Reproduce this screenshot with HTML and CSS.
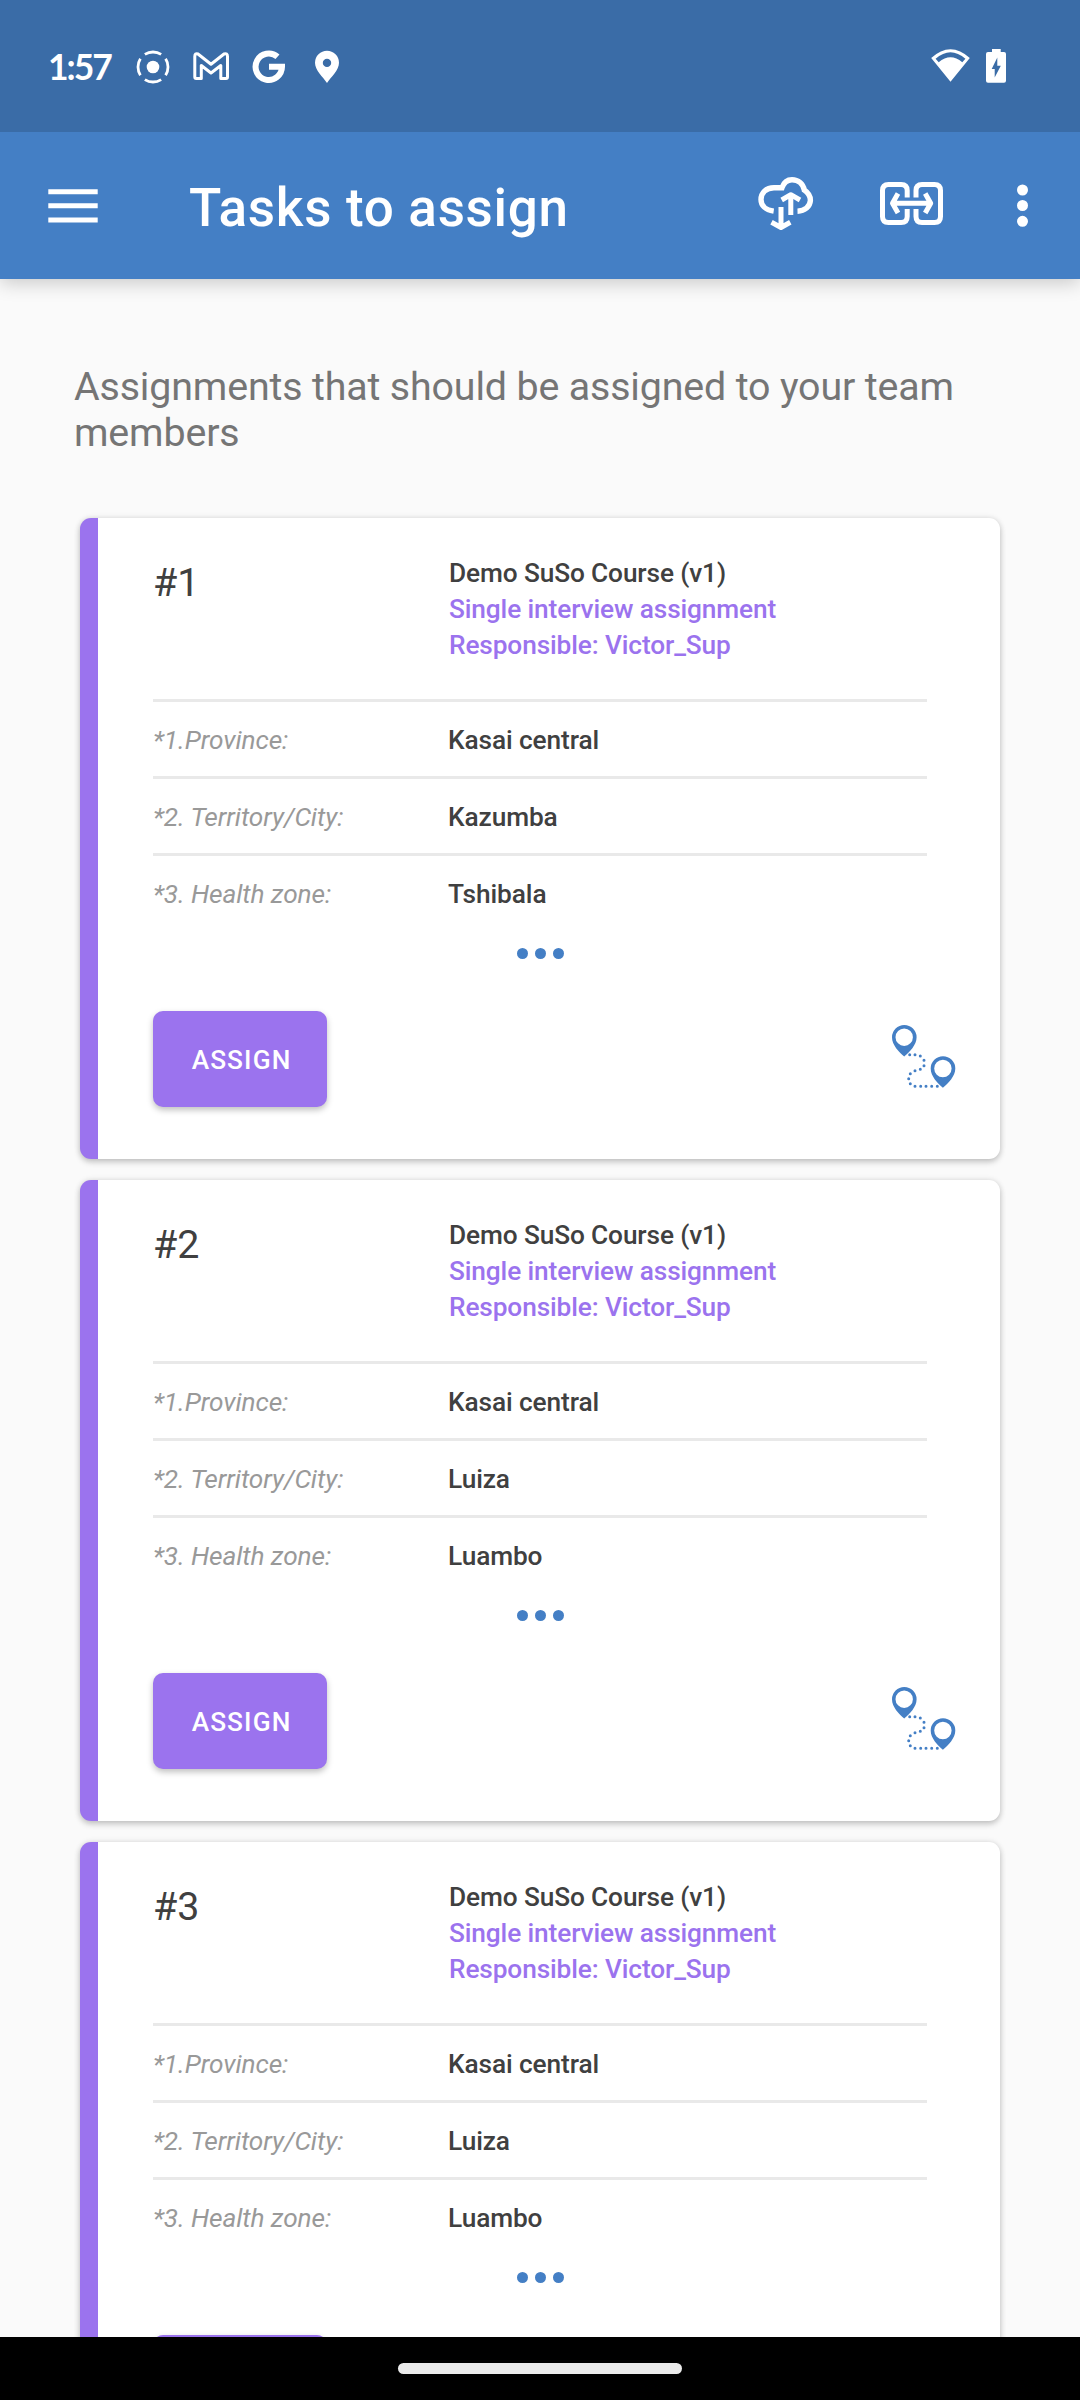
FILE: index.html
```html
<!DOCTYPE html>
<html lang="en">
<head>
<meta charset="utf-8">
<title>Tasks to assign</title>
<link rel="stylesheet" href="styles.css">
</head>
<body>
<svg class="sprite" aria-hidden="true">
  <symbol id="route" viewBox="890 1023 67 67">
    <g fill="#447fc5">
      <path id="pin" fill-rule="evenodd" d="M904.2 1056.5C899 1052 892 1045 892 1037.2a12.3 12.3 0 0 1 24.6 0C916.600 1045 909.500 1052 904.200 1056.500ZM904.200 1028.500a8.700 8.700 0 1 0 0 17.400a8.700 8.700 0 1 0 0-17.400Z"/>
      <use href="#pin" x="38.7" y="31.300"/>
    </g>
    <path fill="none" stroke="#447fc5" stroke-width="3" stroke-linecap="round" d="M909.700 1054.700h0M915 1054.700h0M920.300 1056h0M924 1060.300h0M924 1065.700h0M920.300 1069.300h0M915 1070.700h0M910.300 1073.700h0M908.700 1078.700h0M910.300 1083.700h0M915 1086.300h0M920.700 1086.300h0M926 1086.300h0M931.700 1086.300h0M937.300 1086.300h0"/>
  </symbol>
</svg>
<div class="screen">
  <header class="status">
    <span class="clock">1:57</span>
    <svg class="notifications" width="208" height="40" viewBox="134 47 208 40" fill="none" stroke="#fff">
      <circle cx="153" cy="67" r="6.300" fill="#fff" stroke="none"/>
      <circle cx="153" cy="67" r="15" stroke-width="2.800" pathLength="360" stroke-dasharray="66 24" stroke-dashoffset="33"/>
      <path stroke-width="3" stroke-linejoin="round" d="M194.800 56.500Q194.800 52.700 198 54L211 64.300L224 54Q227.500 52.700 227.500 56.500V77q0 1.400-1.400 1.400H220.800V65.500L211 73L201.300 65.500V78.400H196.200q-1.400 0-1.400-1.400Z"/>
      <path stroke-width="6" d="M277.500 56.800A13.200 13.200 0 1 0 282 66.800H269"/>
      <path fill="#fff" stroke="none" fill-rule="evenodd" d="M327 83C323 77 315 70.500 315 62.800a12 12 0 0 1 24 0C339 70.500 331 77 327 83ZM327 58.700a4.200 4.200 0 1 0 0 8.400a4.200 4.200 0 1 0 0-8.400Z"/>
    </svg>
    <svg class="system" width="78" height="40" viewBox="930 47 78 40" fill="#fff" fill-rule="evenodd">
      <path d="M950.500 81.700L931.200 58Q950.500 40.500 969.800 58ZM935.600 58.700L938.700 62.300Q950.500 52.300 962.300 62.300L965.400 58.700Q950.500 45.700 935.600 58.700Z"/>
      <path d="M992 49h8.700v3h3.300q2 0 2 2v26.700q0 2-2 2h-16q-2 0-2-2V54q0-2 2-2h4ZM997.300 57.500L991.700 69H994.700V77.500L1000.800 65.700H997.300Z"/>
    </svg>
  </header>
  <nav class="appbar">
    <svg class="menu" width="50" height="34" viewBox="0 0 50 34" fill="#fff"><path d="M.3.300h49.400v5H.3zM.3 14.300h49.400v5H.3zM.3 28.500h49.400v5H.3z"/></svg>
    <h1 class="title">Tasks to assign</h1>
    <svg class="actions" width="272" height="56" viewBox="757 176 272 56" fill="none" stroke="#fff" stroke-width="5">
      <path stroke-width="5.400" d="M773.700 211.200C765 210 761 205 761 199.500C761 193 766 187.700 774 187.700H782C784 182 788 179.800 792 179.800C798.500 179.800 803 184 804.300 190C808 192.500 810.400 196 810.400 200.300C810 206.500 805 211 797.500 211.200"/>
      <path d="M790.800 215V196M781.700 200L790.800 194.700L800 200M781 207V227M771.500 222.300L781 227.500L790.300 222.300" stroke-linejoin="round"/>
      <path d="M907.200 197.500V190.500q0-6-6-6H888.500q-6 0-6 6V216.500q0 6 6 6H901.200q6 0 6-6V209M916 197.500V190.500q0-6 6-6H934.500q6 0 6 6V216.500q0 6-6 6H922q-6 0-6-6V209M893 203.200H930M898 193.500L892.500 203.200L898 213M925.200 193.500L930.700 203.200L925.200 213" stroke-linejoin="round"/>
      <path stroke-width="11" stroke-linecap="round" d="M1022.500 190h0M1022.500 205.500h0M1022.500 221.300h0"/>
    </svg>
  </nav>
  <main class="content">
    <p class="intro">Assignments that should be assigned to your team members</p>

    <article class="card">
      <div class="head">
        <h2 class="number">#1</h2>
        <div class="summary"><p class="survey">Demo SuSo Course (v1)</p><p>Single interview assignment</p><p>Responsible: Victor_Sup</p></div>
      </div>
      <dl class="row"><dt>*1.Province:</dt><dd>Kasai central</dd></dl>
      <dl class="row"><dt>*2. Territory/City:</dt><dd>Kazumba</dd></dl>
      <dl class="row"><dt>*3. Health zone:</dt><dd>Tshibala</dd></dl>
      <div class="more"><i></i><i></i><i></i></div>
      <div class="foot"><button class="assign">ASSIGN</button><svg class="route" width="67" height="67"><use href="#route"/></svg></div>
    </article>

    <article class="card">
      <div class="head">
        <h2 class="number">#2</h2>
        <div class="summary"><p class="survey">Demo SuSo Course (v1)</p><p>Single interview assignment</p><p>Responsible: Victor_Sup</p></div>
      </div>
      <dl class="row"><dt>*1.Province:</dt><dd>Kasai central</dd></dl>
      <dl class="row"><dt>*2. Territory/City:</dt><dd>Luiza</dd></dl>
      <dl class="row"><dt>*3. Health zone:</dt><dd>Luambo</dd></dl>
      <div class="more"><i></i><i></i><i></i></div>
      <div class="foot"><button class="assign">ASSIGN</button><svg class="route" width="67" height="67"><use href="#route"/></svg></div>
    </article>

    <article class="card">
      <div class="head">
        <h2 class="number">#3</h2>
        <div class="summary"><p class="survey">Demo SuSo Course (v1)</p><p>Single interview assignment</p><p>Responsible: Victor_Sup</p></div>
      </div>
      <dl class="row"><dt>*1.Province:</dt><dd>Kasai central</dd></dl>
      <dl class="row"><dt>*2. Territory/City:</dt><dd>Luiza</dd></dl>
      <dl class="row"><dt>*3. Health zone:</dt><dd>Luambo</dd></dl>
      <div class="more"><i></i><i></i><i></i></div>
      <div class="foot"><button class="assign"></button></div>
    </article>
  </main>
  <footer class="navbar"><div class="handle"></div></footer>
</div>
</body>
</html>
```
FILE: styles.css
```css
* { box-sizing: border-box; margin: 0; padding: 0; }
body { background: #fafafa; font-family: Roboto, sans-serif; }
svg { display: block; flex: none; }
.sprite { display: none; }
.screen { display: flex; flex-direction: column; width: 1080px; height: 2400px; overflow: hidden; }

.status { flex: none; display: flex; align-items: center; height: 132px; padding: 2px 72px 0 48px; background: #3a6ca7; color: #fff; z-index: 2; }
.clock { width: 86px; font: 700 35.5px/44px Lato, sans-serif; letter-spacing: -2px; }
.system { margin-left: auto; }

.appbar { flex: none; display: flex; align-items: center; height: 147px; padding: 0 51px 0 48px; background: #447fc5; color: #fff; box-shadow: 0 4px 18px rgba(0, 0, 0, .2); z-index: 1; }
.title { margin-left: 91px; font-size: 53px; font-weight: 500; line-height: 62px; letter-spacing: .7px; padding-top: 4px; }
.actions { margin-left: auto; margin-top: -3px; }

.content { flex: 1; min-height: 0; overflow: hidden; padding: 85px 80px 0; }
.intro { margin: 0 -6px 62px; font-size: 39.375px; line-height: 46px; letter-spacing: -.15px; color: #757575; }

.card { height: 641px; margin-bottom: 21px; padding: 0 43px 0 55px; border-left: 18px solid #9b73ee; border-radius: 11px; background: #fff; box-shadow: 0 3px 6px rgba(0, 0, 0, .2), 0 0 6px rgba(0, 0, 0, .1); }
.head, .row { display: grid; grid-template-columns: 295px 1fr; margin-right: 30px; }
.head { height: 181px; padding-top: 37px; }
.number { padding-top: 5px; font-size: 39.375px; font-weight: 400; line-height: 46px; color: #404040; }
.summary { padding-left: 1px; font-size: 26.25px; font-weight: 500; line-height: 36px; letter-spacing: -.12px; color: #9b73ee; }
.survey { color: #404040; }
.row { height: 77px; align-items: center; padding-top: 2px; border-top: 3px solid #e9e9e9; font-size: 26.25px; line-height: 36px; letter-spacing: -.1px; }
.row dt { color: #999; font-style: italic; }
.row dd { color: #404040; font-weight: 500; }
.more { display: flex; justify-content: center; gap: 7px; height: 81px; padding-top: 18px; margin-right: 14px; margin-left: -15px; }
.more i { width: 11px; height: 11px; border-radius: 50%; background: #447fc5; }
.foot { display: flex; justify-content: space-between; align-items: flex-start; }
.assign { width: 174px; height: 96px; padding: 2px 0 0 3px; border: 0; border-radius: 10px; background: #9b73ee; color: #fff; font: 500 26.25px/36px Roboto, sans-serif; letter-spacing: 1.1px; box-shadow: 0 3px 6px rgba(0, 0, 0, .25); }
.route { margin-top: 12px; }

.navbar { flex: none; display: flex; justify-content: center; align-items: flex-start; height: 63px; padding-top: 26px; background: #000; }
.handle { width: 284px; height: 11px; border-radius: 6px; background: #ebebeb; }
```
